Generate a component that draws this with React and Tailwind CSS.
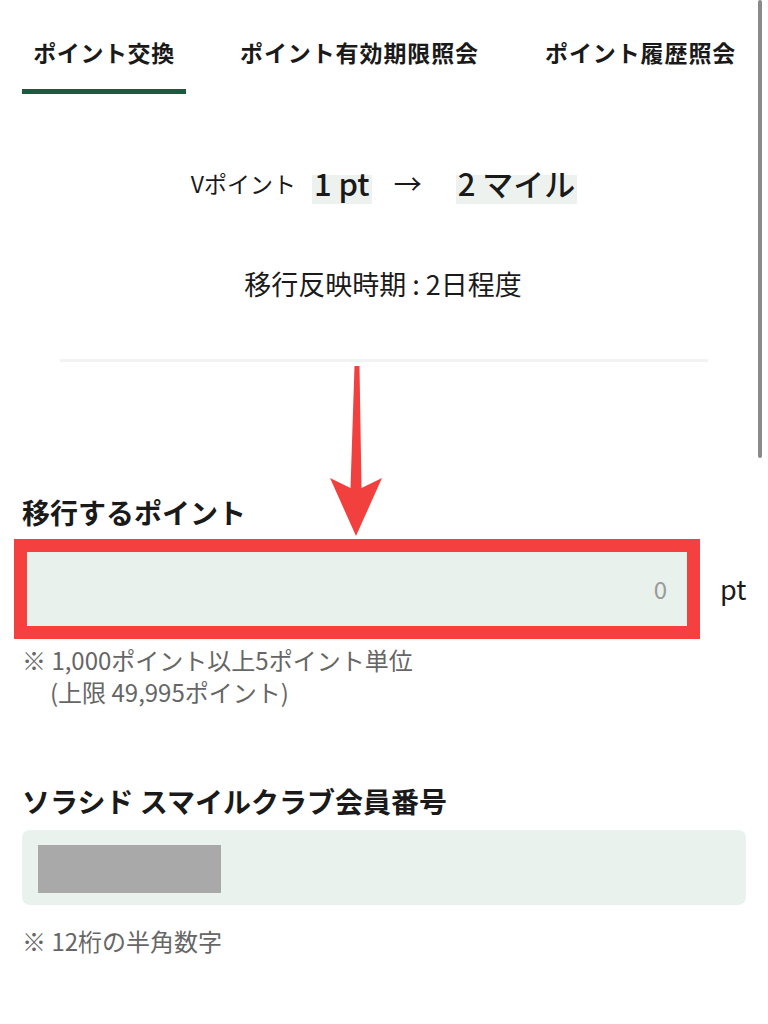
export default function App() {
  const font = { fontFamily: '"Noto Sans CJK JP", "Noto Sans", sans-serif' };

  return (
    <div
      className="relative w-[768px] h-[1024px] overflow-hidden bg-white text-[#1a1a1a]"
      style={font}
    >
      {/* tabs */}
      <div className="flex items-end pl-[22px]">
        <div className="w-[164px] pt-[37px] pb-[22px] border-b-[5px] border-[#1c5b40] text-center text-[23px] leading-[30px] font-bold tracking-[0.6px]">
          ポイント交換
        </div>
        <div className="ml-[54px] pt-[37px] pb-[27px] text-[23px] leading-[30px] font-bold tracking-[0.9px]">
          ポイント有効期限照会
        </div>
        <div className="ml-[66px] pt-[37px] pb-[27px] text-[23px] leading-[30px] font-bold tracking-[0.9px]">
          ポイント履歴照会
        </div>
      </div>

      {/* rate */}
      <div className="mt-[68px] flex items-center justify-center h-[42px]">
        <span className="text-[23px] leading-[30px]">Vポイント</span>
        <span className="ml-[16px] px-[2px] text-[31px] leading-[42px] font-medium bg-[linear-gradient(transparent_30%,#edf2ee_30%)]">
          1 pt
        </span>
        <span className="ml-[22px] text-[28px] leading-[30px]">→</span>
        <span className="ml-[34px] px-[2px] text-[31px] leading-[42px] font-medium bg-[linear-gradient(transparent_30%,#edf2ee_30%)]">
          2 マイル
        </span>
      </div>

      <div className="mt-[62px] text-center text-[27px] leading-[36px] pr-[2px]">
        移行反映時期 : 2日程度
      </div>

      <div className="mt-[57px] mx-[60px] h-[3px] bg-[#f2f2f2]" />

      {/* points to transfer */}
      <div className="mt-[133px] pl-[22px] text-[28px] leading-[34px] font-bold">
        移行するポイント
      </div>
      <div className="mt-[10px] ml-[14px] flex items-center">
        <div className="w-[686px] h-[100px] border-[13px] border-[#f4403f] bg-[#e8f1ec] flex items-center justify-end pr-[20px]">
          <span className="text-[24px] text-[#9a9a9a]">0</span>
        </div>
        <span className="ml-[20px] text-[27px] leading-[34px]">pt</span>
      </div>
      <div className="mt-[5px] pl-[22px] text-[24px] leading-[32px] text-[#666]">
        <div>※ 1,000ポイント以上5ポイント単位</div>
        <div className="pl-[28px]">(上限 49,995ポイント)</div>
      </div>

      {/* member number */}
      <div className="mt-[76px] pl-[22px] text-[28px] leading-[34px] font-bold">
        ソラシド スマイルクラブ会員番号
      </div>
      <div className="mt-[12px] mx-[22px] h-[75px] rounded-lg bg-[#e9f2ed] pl-[16px] pt-[15px]">
        <div className="w-[183px] h-[48px] bg-[#a9a9a9]" />
      </div>
      <div className="mt-[20px] pl-[22px] text-[24px] leading-[32px] text-[#666]">
        ※ 12桁の半角数字
      </div>

      {/* annotation arrow */}
      <svg
        className="absolute left-[326px] top-[366px]"
        width="60"
        height="172"
        viewBox="0 0 60 172"
      >
        <path
          d="M28.5 0 L33.5 0 L35.5 122 L56 112 L30 170 L4 112 L24.5 122 Z"
          fill="#f2403f"
        />
      </svg>

      {/* scrollbar */}
      <div className="absolute right-[6px] top-0 w-[4px] h-[458px] rounded-full bg-[#8a8a8a]" />
    </div>
  );
}
